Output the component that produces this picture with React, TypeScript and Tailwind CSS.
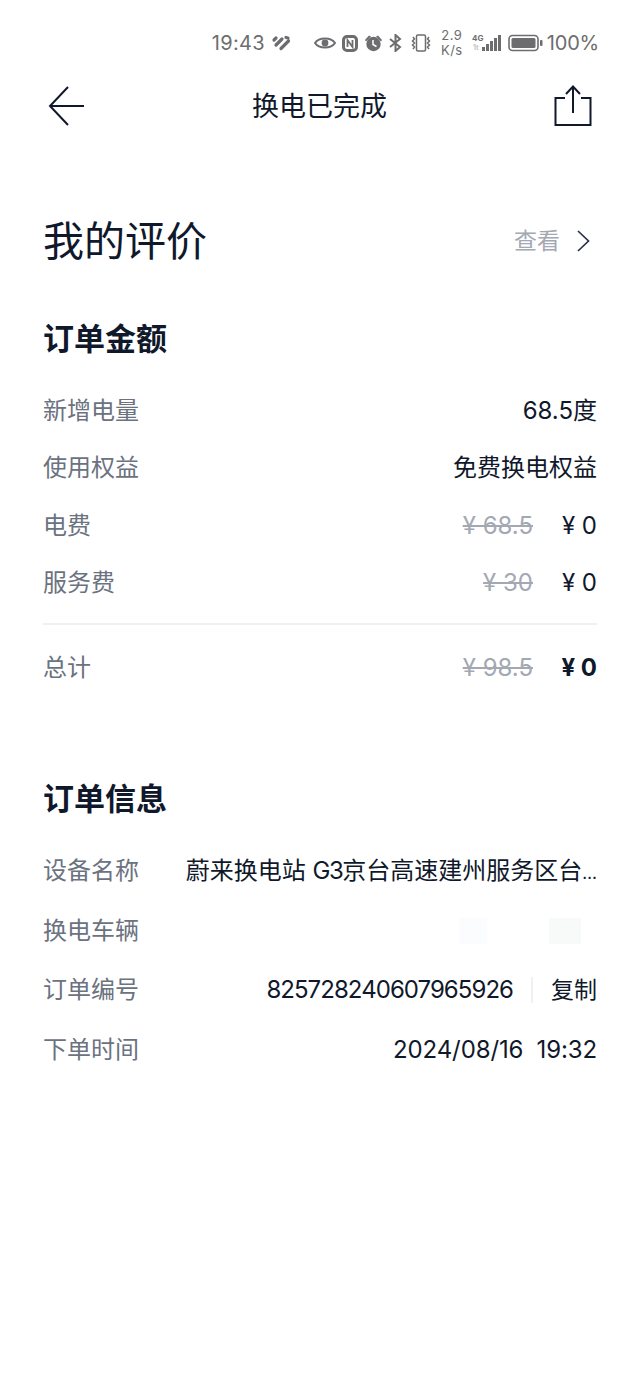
import React from 'react';

const font = { fontFamily: 'Inter, "Noto Sans CJK SC", sans-serif' };

function StatusBar() {
  return (
    <div className="h-[58px] pt-[28px] pr-[41px] flex justify-end items-center text-[#6d6d6f]">
      <span className="text-[20px] leading-none tracking-[0.3px] w-[53px] whitespace-nowrap">19:43</span>
      {/* heart-ish mark */}
      <svg className="ml-[6px] w-[20px] h-[16px]" viewBox="0 0 20 16" fill="none" stroke="#6d6d6f" strokeWidth="3.2" strokeLinecap="round">
        <path d="M3 5 L5 3 M5 10 L11 4 M10 13.5 L17.5 6 M15 2.5 L17 3" />
      </svg>
      {/* eye */}
      <svg className="ml-[23px] w-[22px] h-[14px]" viewBox="0 0 22 14" fill="none" stroke="#6d6d6f" strokeWidth="2">
        <path d="M1 7 C5 1 17 1 21 7 C17 13 5 13 1 7 Z" />
        <circle cx="11" cy="7" r="3.4" fill="#6d6d6f" stroke="none" />
      </svg>
      {/* nfc */}
      <svg className="ml-[6px] w-[16px] h-[17px]" viewBox="0 0 16 17" fill="none" stroke="#6d6d6f" strokeWidth="3">
        <rect x="1.5" y="1.5" width="13" height="14" rx="3.5" />
        <path d="M5.5 12 V5 L10.5 12 V5" strokeWidth="1.8" />
      </svg>
      {/* alarm */}
      <svg className="ml-[6px] w-[19px] h-[18px]" viewBox="0 0 19 18" fill="#6d6d6f">
        <circle cx="9.5" cy="10" r="7.2" />
        <path d="M1 6 L5 1.5 L7 2.5 L2 7.5 Z M18 6 L14 1.5 L12 2.5 L17 7.5 Z" />
        <path d="M9 6 V10.5 L12.5 12.5" stroke="#fff" strokeWidth="1.5" fill="none" />
      </svg>
      {/* bluetooth */}
      <svg className="ml-[6px] w-[13px] h-[18px]" viewBox="0 0 13 18" fill="none" stroke="#6d6d6f" strokeWidth="2">
        <path d="M1 5 L11 13 L6.5 17 V1 L11 5 L1 13" />
      </svg>
      {/* vibrate */}
      <svg className="ml-[9px] w-[20px] h-[18px]" viewBox="0 0 20 18" fill="none" stroke="#6d6d6f" strokeWidth="1.5">
        <rect x="5.5" y="1" width="9" height="16" rx="1.5" />
        <path d="M2 3 L3.5 5 L1.5 7 L3.5 9 L1.5 11 L3.5 13 L2 15 M18 3 L16.5 5 L18.5 7 L16.5 9 L18.5 11 L16.5 13 L18 15" />
      </svg>
      <div className="ml-[9px] w-[24px] flex flex-col items-center text-[13px] leading-[15px] tracking-[0.5px]">
        <span>2.9</span>
        <span>K/s</span>
      </div>
      {/* signal */}
      <svg className="ml-[8px] w-[30px] h-[20px]" viewBox="0 0 30 20" fill="#6d6d6f">
        <rect x="10" y="14" width="3" height="4" />
        <rect x="14" y="11" width="3" height="7" />
        <rect x="18" y="8" width="3" height="10" />
        <rect x="22" y="5" width="3" height="13" />
        <rect x="26" y="2" width="3" height="16" />
        <text x="0" y="8" fontSize="8" fontWeight="700" fontFamily="Inter">4G</text>
        <text x="1" y="17" fontSize="7" fontWeight="700" fontFamily="Inter" fill="#c4c4c6">1t</text>
      </svg>
      {/* battery */}
      <svg className="ml-[6px] w-[35px] h-[18px]" viewBox="0 0 35 18" fill="none">
        <rect x="1" y="1.5" width="29" height="15" rx="3.5" stroke="#6d6d6f" strokeWidth="1.6" />
        <rect x="3.5" y="4" width="24" height="10" rx="1.5" fill="#6d6d6f" />
        <rect x="32" y="6" width="2.5" height="6" rx="1" fill="#6d6d6f" />
      </svg>
      <span className="ml-[4px] text-[20px] leading-none tracking-[-0.2px]">100%</span>
    </div>
  );
}

function Row({ label, h, children }: { label: string; h: string; children: React.ReactNode }) {
  return (
    <div className={`flex items-center justify-between ${h}`}>
      <span className="text-[#6b7280] shrink-0">{label}</span>
      {children}
    </div>
  );
}

function Price({ was, now, bold }: { was: string; now: string; bold?: boolean }) {
  return (
    <div className="flex items-center">
      <span className="text-[#a3a8b3] line-through">{was}</span>
      <span className={`w-[64px] text-right text-[#10182b] ${bold ? 'font-bold' : ''}`}>{now}</span>
    </div>
  );
}

export default function App() {
  return (
    <div className="w-[640px] h-[1389px] bg-white overflow-hidden text-[24px] text-[#10182b]" style={font}>
      <StatusBar />

      {/* Nav */}
      <div className="h-[80px] mt-[8px] pl-[47px] pr-[48px] flex items-center justify-between">
        <svg className="w-[38px] h-[42px]" viewBox="0 0 38 42" fill="none" stroke="#10182b" strokeWidth="2">
          <path d="M21 2 L3 21 L21 40 M3 21 H37" />
        </svg>
        <span className="text-[27px] leading-none">换电已完成</span>
        <svg className="w-[38px] h-[42px]" viewBox="0 0 38 42" fill="none" stroke="#10182b" strokeWidth="2">
          <path d="M11 13 H1.5 V40 H36.5 V13 H27 M19 28 V2 M12 9 L19 1.5 L26 9" />
        </svg>
      </div>

      <div className="px-[43px]">
        {/* Review */}
        <div className="mt-[60px] h-[70px] flex items-center justify-between">
          <h1 className="text-[41px] leading-none font-normal">我的评价</h1>
          <div className="flex items-center text-[#a3a8b3] text-[23px]">
            <span>查看</span>
            <svg className="ml-[17px] mr-[7px] w-[13px] h-[22px]" viewBox="0 0 13 22" fill="none" stroke="#2a3244" strokeWidth="1.7">
              <path d="M1 1 L11.5 11 L1 21" />
            </svg>
          </div>
        </div>

        {/* Order amount */}
        <h2 className="mt-[43px] text-[31px] leading-[40px] font-bold">订单金额</h2>
        <div className="mt-[23px]">
          <Row label="新增电量" h="h-[57.5px]"><span>68.5度</span></Row>
          <Row label="使用权益" h="h-[57.5px]"><span>免费换电权益</span></Row>
          <Row label="电费" h="h-[57.5px]"><Price was="¥ 68.5" now="¥ 0" /></Row>
          <Row label="服务费" h="h-[57.5px]"><Price was="¥ 30" now="¥ 0" /></Row>
        </div>
        <div className="mt-[11px] h-[2px] bg-[#eff0f2]" />
        <div className="mt-[14px]">
          <Row label="总计" h="h-[57.5px]"><Price was="¥ 98.5" now="¥ 0" bold /></Row>
        </div>

        {/* Order info */}
        <h2 className="mt-[82px] text-[31px] leading-[40px] font-bold">订单信息</h2>
        <div className="mt-[23px]">
          <Row label="设备名称" h="h-[59.5px]">
            <span className="whitespace-nowrap">
              蔚来换电站 <span className="tracking-[-1.5px]">G3</span>京台高速建州服务区台<span className="text-[17px]">…</span>
            </span>
          </Row>
          <Row label="换电车辆" h="h-[59.5px]">
            {/* plate and model are smudged out in the source */}
            <div className="flex items-center gap-[62px] mr-[16px]">
              <span className="w-[28px] h-[26px] bg-[#fafcfd]" />
              <span className="w-[32px] h-[26px] bg-[#f8f9f9]" />
            </div>
          </Row>
          <Row label="订单编号" h="h-[59.5px]">
            <div className="flex items-center">
              <span className="tracking-[-0.95px]">825728240607965926</span>
              <span className="ml-[18px] w-[2px] h-[26px] bg-[#eff0f2]" />
              <span className="ml-[18px] text-[23px]">复制</span>
            </div>
          </Row>
          <Row label="下单时间" h="h-[59.5px]"><span className="whitespace-pre tracking-[-0.12px]">2024/08/16  19:32</span></Row>
        </div>
      </div>
    </div>
  );
}
